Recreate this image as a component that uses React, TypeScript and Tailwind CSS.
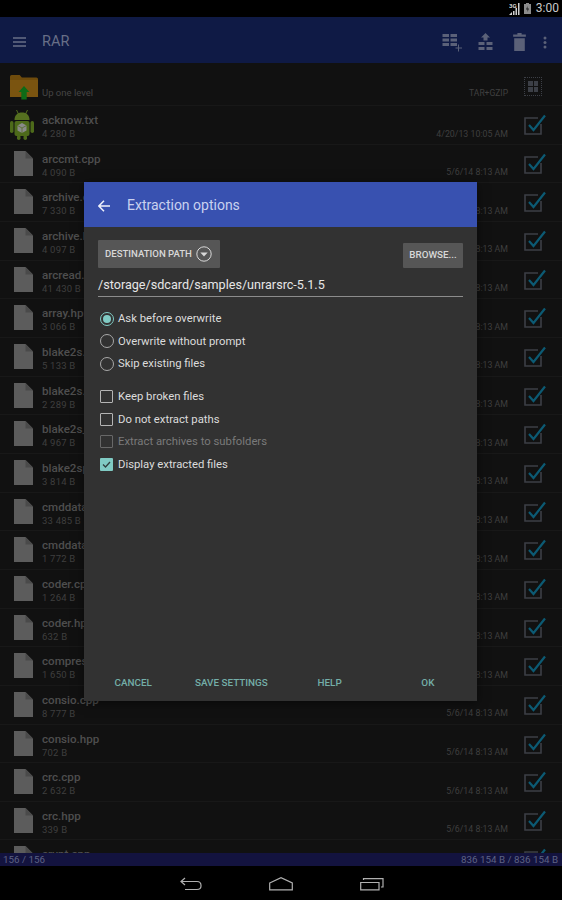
import React from "react";

const files: [string, string, string][] = [
  ["arccmt.cpp", "4 090 B", "5/6/14 8:13 AM"],
  ["archive.cpp", "7 330 B", "5/6/14 8:13 AM"],
  ["archive.hpp", "4 097 B", "5/6/14 8:13 AM"],
  ["arcread.cpp", "41 430 B", "5/6/14 8:13 AM"],
  ["array.hpp", "3 066 B", "5/6/14 8:13 AM"],
  ["blake2s.cpp", "5 133 B", "5/6/14 8:13 AM"],
  ["blake2s.hpp", "2 289 B", "5/6/14 8:13 AM"],
  ["blake2s_sse.cpp", "4 967 B", "5/6/14 8:13 AM"],
  ["blake2sp.cpp", "3 814 B", "5/6/14 8:13 AM"],
  ["cmddata.cpp", "33 485 B", "5/6/14 8:13 AM"],
  ["cmddata.hpp", "1 772 B", "5/6/14 8:13 AM"],
  ["coder.cpp", "1 264 B", "5/6/14 8:13 AM"],
  ["coder.hpp", "632 B", "5/6/14 8:13 AM"],
  ["compress.hpp", "1 650 B", "5/6/14 8:13 AM"],
  ["consio.cpp", "8 777 B", "5/6/14 8:13 AM"],
  ["consio.hpp", "702 B", "5/6/14 8:13 AM"],
  ["crc.cpp", "2 632 B", "5/6/14 8:13 AM"],
  ["crc.hpp", "339 B", "5/6/14 8:13 AM"],
  ["crypt.cpp", "", ""],
];

function FileIcon() {
  return (
    <svg width="19" height="25" viewBox="0 0 19 25" className="shrink-0 mt-[6px] ml-[3px]">
      <path d="M0 0H11.5L19 7.5V25H0Z" fill="#5c5c5c" />
      <path d="M11.5 0L19 7.5H11.5Z" fill="#4a4a4a" />
    </svg>
  );
}

function Check() {
  return (
    <svg width="23" height="23" viewBox="0 0 23 23" className="shrink-0 overflow-visible">
      <path d="M17 9V19H1V3H14" fill="none" stroke="#3c3f46" strokeWidth="1.6" />
      <path d="M5 10L9.5 15L21 0.5" fill="none" stroke="#0c5a73" strokeWidth="2.2" />
    </svg>
  );
}

function Android() {
  return (
    <svg width="26" height="31" viewBox="0 0 25 31" className="shrink-0 mt-[3px]">
      <path d="M7 1L9 5M18 1L16 5" stroke="#55701f" strokeWidth="1" />
      <path d="M5 11C5 6 8 3.500 12.500 3.500C17 3.500 20 6 20 11Z" fill="#55701f" />
      <rect x="5" y="12" width="15" height="15" rx="2" fill="#4d6a1a" />
      <rect x="0.500" y="12" width="3.500" height="12" rx="1.700" fill="#4d6a1a" />
      <rect x="21" y="12" width="3.500" height="12" rx="1.700" fill="#4d6a1a" />
      <rect x="7.500" y="26" width="3.500" height="5" rx="1.700" fill="#4d6a1a" />
      <rect x="14" y="26" width="3.500" height="5" rx="1.700" fill="#4d6a1a" />
      <path d="M12.500 14L17 16.500V21.500L12.500 24L8 21.500V16.500Z" fill="#8a8a8a" />
      <path d="M8 16.500L12.500 19L17 16.500M12.500 19V24" stroke="#4d6a1a" strokeWidth="0.700" fill="none" />
    </svg>
  );
}

function Row({ name, size, date, icon }: { name: string; size: string; date: string; icon: React.ReactNode }) {
  return (
    <div className="h-[38.67px] shrink-0 flex border-b border-[#181818] relative">
      <div className="w-[42px] shrink-0 flex justify-center pl-[1px]">{icon}</div>
      <div className="flex-1 min-w-0 flex flex-col pt-[6px]">
        <div className="text-[11.6px] leading-[16px] font-medium text-[#4e4e4e]">{name}</div>
        <div className="text-[9.5px] leading-[12px] tracking-[0.2px] text-[#3f3f3f]">{size}</div>
      </div>
      <div className="w-[111px] shrink-0 text-right text-[8.8px] leading-[12px] pt-[21.5px] text-[#3f3f3f]">{date}</div>
      <div className="w-[54px] pl-[16px] pt-[9px] shrink-0"><Check /></div>
    </div>
  );
}

function Radio({ label, on }: { label: string; on?: boolean }) {
  return (
    <div className="h-[22.5px] flex items-center">
      <div className={`w-[14px] h-[14px] ml-[2px] rounded-full border-[1.5px] flex items-center justify-center ${on ? "border-[#80cbc4]" : "border-[#a8a8a8]"}`}>
        {on && <div className="w-[8px] h-[8px] rounded-full bg-[#80cbc4]" />}
      </div>
      <span className="ml-[4px] mt-[2px] text-[11.3px] text-[#dcdcdc]">{label}</span>
    </div>
  );
}

function Box({ label, on, off }: { label: string; on?: boolean; off?: boolean }) {
  return (
    <div className="h-[22.5px] flex items-center">
      <div className={`w-[13px] h-[13px] ml-[2px] mr-[1px] rounded-[1px] flex items-center justify-center ${on ? "bg-[#80cbc4]" : off ? "border-[1.5px] border-[#686868]" : "border-[1.5px] border-[#b4b4b4]"}`}>
        {on && (
          <svg width="11" height="11" viewBox="0 0 11 11">
            <path d="M2 5.500L4.500 8L9 3" fill="none" stroke="#2f3f3e" strokeWidth="1.300" />
          </svg>
        )}
      </div>
      <span className={`ml-[4px] mt-[2px] text-[11.3px] ${off ? "text-[#7a7a7a]" : "text-[#dcdcdc]"}`}>{label}</span>
    </div>
  );
}

export default function App() {
  return (
    <div className="relative w-[562px] h-[900px] flex flex-col overflow-hidden bg-[#111111] font-['Roboto',sans-serif]">
      <div className="h-[17px] shrink-0 bg-black flex items-center justify-end pr-[3px] gap-[4px]">
        <svg width="11" height="13" viewBox="0 0 11 13">
          <path d="M4 13V9H5.500V13ZM6.500 13V6H8V13ZM9 13V1H10.500V13Z" fill="#cfcfcf" />
          <path d="M0 13L3 10V13Z" fill="#cfcfcf" />
          <text x="0" y="5.500" fontSize="6" fontWeight="700" fill="#d8d8d8" fontFamily="Roboto, sans-serif">3G</text>
        </svg>
        <svg width="7" height="11" viewBox="0 0 7 11"><path d="M2 0H5V1H7V11H0V1H2Z" fill="#8c8c8c" /><path d="M3.500 3L2 6.500H3.500V9L5 5.500H3.500Z" fill="#222" /></svg>
        <span className="text-[12px] leading-[17px] text-[#c9c9c9] ml-[1px]">3:00</span>
      </div>

      <div className="h-[46px] shrink-0 bg-[#0f1a45] flex items-center pt-[4px]">
        <svg width="14" height="10" viewBox="0 0 14 10" className="ml-[13px]">
          <path d="M0 1H13M0 5H13M0 9H13" stroke="#686f87" strokeWidth="1.300" />
        </svg>
        <span className="ml-[15px] text-[14.5px] text-[#686f87]">RAR</span>
        <div className="flex-1" />
        <svg width="21" height="19" viewBox="0 0 20 19">
          <path d="M0 1H6.500V4H0ZM0 5.500H6.500V8.500H0ZM0 10H6.500V13H0ZM8 1H14.500V4H8ZM8 5.500H14.500V8.500H8ZM8 10H14.500V13H8Z" fill="#5b6178" />
          <path d="M16 11.500V18.500M13 15H19.500" stroke="#5b6178" strokeWidth="1" />
        </svg>
        <svg width="15" height="18" viewBox="0 0 14 18" className="ml-[15px]">
          <path d="M7 0L11.500 4.500H9V7.500H5V4.500H2.500Z" fill="#5b6178" />
          <path d="M0 9H6V12H0ZM8 9H14V12H8ZM0 14H6V17H0ZM8 14H14V17H8Z" fill="#5b6178" />
        </svg>
        <svg width="13" height="18" viewBox="0 0 12 17" className="ml-[20px]">
          <path d="M4 0H8V1.500H12V3.500H0V1.500H4ZM1 5H11V17H1Z" fill="#5b6178" />
        </svg>
        <svg width="4" height="13" viewBox="0 0 4 13" className="ml-[17px] mr-[15px]">
          <circle cx="2" cy="2" r="1.500" fill="#5b6178" /><circle cx="2" cy="6.500" r="1.500" fill="#5b6178" /><circle cx="2" cy="11" r="1.500" fill="#5b6178" />
        </svg>
      </div>

      <div className="flex-1 min-h-0 overflow-hidden flex flex-col">
        <div className="h-[43px] shrink-0 flex border-b border-[#181818]">
          <div className="w-[42px] shrink-0 pl-[10px] pt-[12px]">
            <svg width="28" height="25" viewBox="0 0 26 25" preserveAspectRatio="none">
              <path d="M0 1.500Q0 0 1.500 0H9L11 2.500H24.500Q26 2.500 26 4V22H0Z" fill="#6e4b0c" />
              <path d="M0 5H26V22H0Z" fill="#7a5410" />
              <path d="M13 11L18 17H15.500V24.500H10.500V17H8Z" fill="#0d6b17" />
            </svg>
          </div>
          <div className="flex-1 text-[9.500px] leading-[12px] pt-[24px] text-[#454545]">Up one level</div>
          <div className="w-[111px] shrink-0 text-right text-[8.5px] leading-[12px] pt-[24px] text-[#404040]">TAR+GZIP</div>
          <div className="w-[54px] shrink-0 pl-[16px] pt-[14px]">
            <div className="w-[18px] h-[19px] border border-dotted border-[#3c3f46] flex items-center justify-center">
              <div className="grid grid-cols-2 gap-[1px]">
                <div className="w-[4.500px] h-[5px] bg-[#3c3f46]" /><div className="w-[4.500px] h-[5px] bg-[#3c3f46]" />
                <div className="w-[4.500px] h-[5px] bg-[#3c3f46]" /><div className="w-[4.500px] h-[5px] bg-[#3c3f46]" />
              </div>
            </div>
          </div>
        </div>
        <Row name="acknow.txt" size="4 280 B" date="4/20/13 10:05 AM" icon={<Android />} />
        {files.map(([n, s, d]) => (
          <Row key={n} name={n} size={s} date={d} icon={<FileIcon />} />
        ))}
      </div>

      <div className="h-[13px] shrink-0 bg-[#13133f] flex items-center justify-between pl-[3px] pr-[4px] pt-[1px] text-[9.800px] text-[#5e6284]">
        <span>156 / 156</span>
        <span>836 154 B / 836 154 B</span>
      </div>

      <div className="h-[34px] shrink-0 bg-black flex items-start pt-[11px]">
        <svg width="22" height="14" viewBox="0 0 22 14" className="ml-[180px]">
          <path d="M5 1L1 4.500L5 8M1 4.500H17Q21 4.500 21 8.500V9Q21 12.500 17 12.500H5" fill="none" stroke="#b0b0b0" strokeWidth="1.200" />
        </svg>
        <svg width="24" height="14" viewBox="0 0 24 14" className="ml-[67px]">
          <path d="M0.700 6L12 0.700L23.300 6V12.800H0.700Z" fill="none" stroke="#b0b0b0" strokeWidth="1.200" />
        </svg>
        <svg width="24" height="14" viewBox="0 0 24 14" className="ml-[67px]">
          <path d="M0.700 5.500H19V12.800H0.700Z" fill="none" stroke="#b0b0b0" strokeWidth="1.200" />
          <path d="M3.500 3V1.700H23V10H21" fill="none" stroke="#b0b0b0" strokeWidth="1.200" />
        </svg>
      </div>

      <div className="absolute left-[84px] top-[182px] w-[393px] h-[519px] bg-[#323232] flex flex-col shadow-[0_2px_10px_rgba(0,0,0,0.5)]">
        <div className="h-[45px] shrink-0 bg-[#3851b0] flex items-center pt-[2px]">
          <svg width="12" height="12" viewBox="0 0 12 12" className="ml-[14px]">
            <path d="M6 0.700L0.900 6L6 11.300M1 6H12" fill="none" stroke="#eef0fa" strokeWidth="1.500" />
          </svg>
          <span className="ml-[17px] text-[14px] text-[#c9d1ef]">Extraction options</span>
        </div>

        <div className="px-[14px] flex flex-col">
          <div className="flex justify-between items-end mt-[13px] h-[28px]">
            <div className="w-[122px] h-[28px] bg-[#565656] rounded-[1px] flex items-center pl-[7px]">
              <span className="text-[9.6px] font-medium text-[#d8d8d8]">DESTINATION PATH</span>
              <svg width="16" height="16" viewBox="0 0 16 16" className="ml-[4px]">
                <circle cx="8" cy="8" r="7.200" fill="none" stroke="#d8d8d8" strokeWidth="1" />
                <path d="M4.300 6.500H11.700L8 10.500Z" fill="#d8d8d8" />
              </svg>
            </div>
            <div className="w-[60px] h-[25px] bg-[#565656] rounded-[1px] flex items-center justify-center text-[9.8px] font-medium text-[#d8d8d8]">BROWSE...</div>
          </div>
          <div className="mt-[7px] h-[22px] border-b-[1.5px] border-[#8c8c8c] text-[12.6px] leading-[19px] text-[#e6e6e6]">/storage/sdcard/samples/unrarsrc-5.1.5</div>

          <div className="mt-[10.5px] flex flex-col">
            <Radio label="Ask before overwrite" on />
            <Radio label="Overwrite without prompt" />
            <Radio label="Skip existing files" />
          </div>
          <div className="mt-[10.5px] flex flex-col">
            <Box label="Keep broken files" />
            <Box label="Do not extract paths" />
            <Box label="Extract archives to subfolders" off />
            <Box label="Display extracted files" on />
          </div>
        </div>

        <div className="flex-1" />
        <div className="h-[26px] shrink-0 flex items-start">
          {["CANCEL", "SAVE SETTINGS", "HELP", "OK"].map((t) => (
            <div key={t} className="flex-1 text-center text-[9.9px] leading-[16px] font-medium text-[#74aea8]">{t}</div>
          ))}
        </div>
      </div>
    </div>
  );
}
